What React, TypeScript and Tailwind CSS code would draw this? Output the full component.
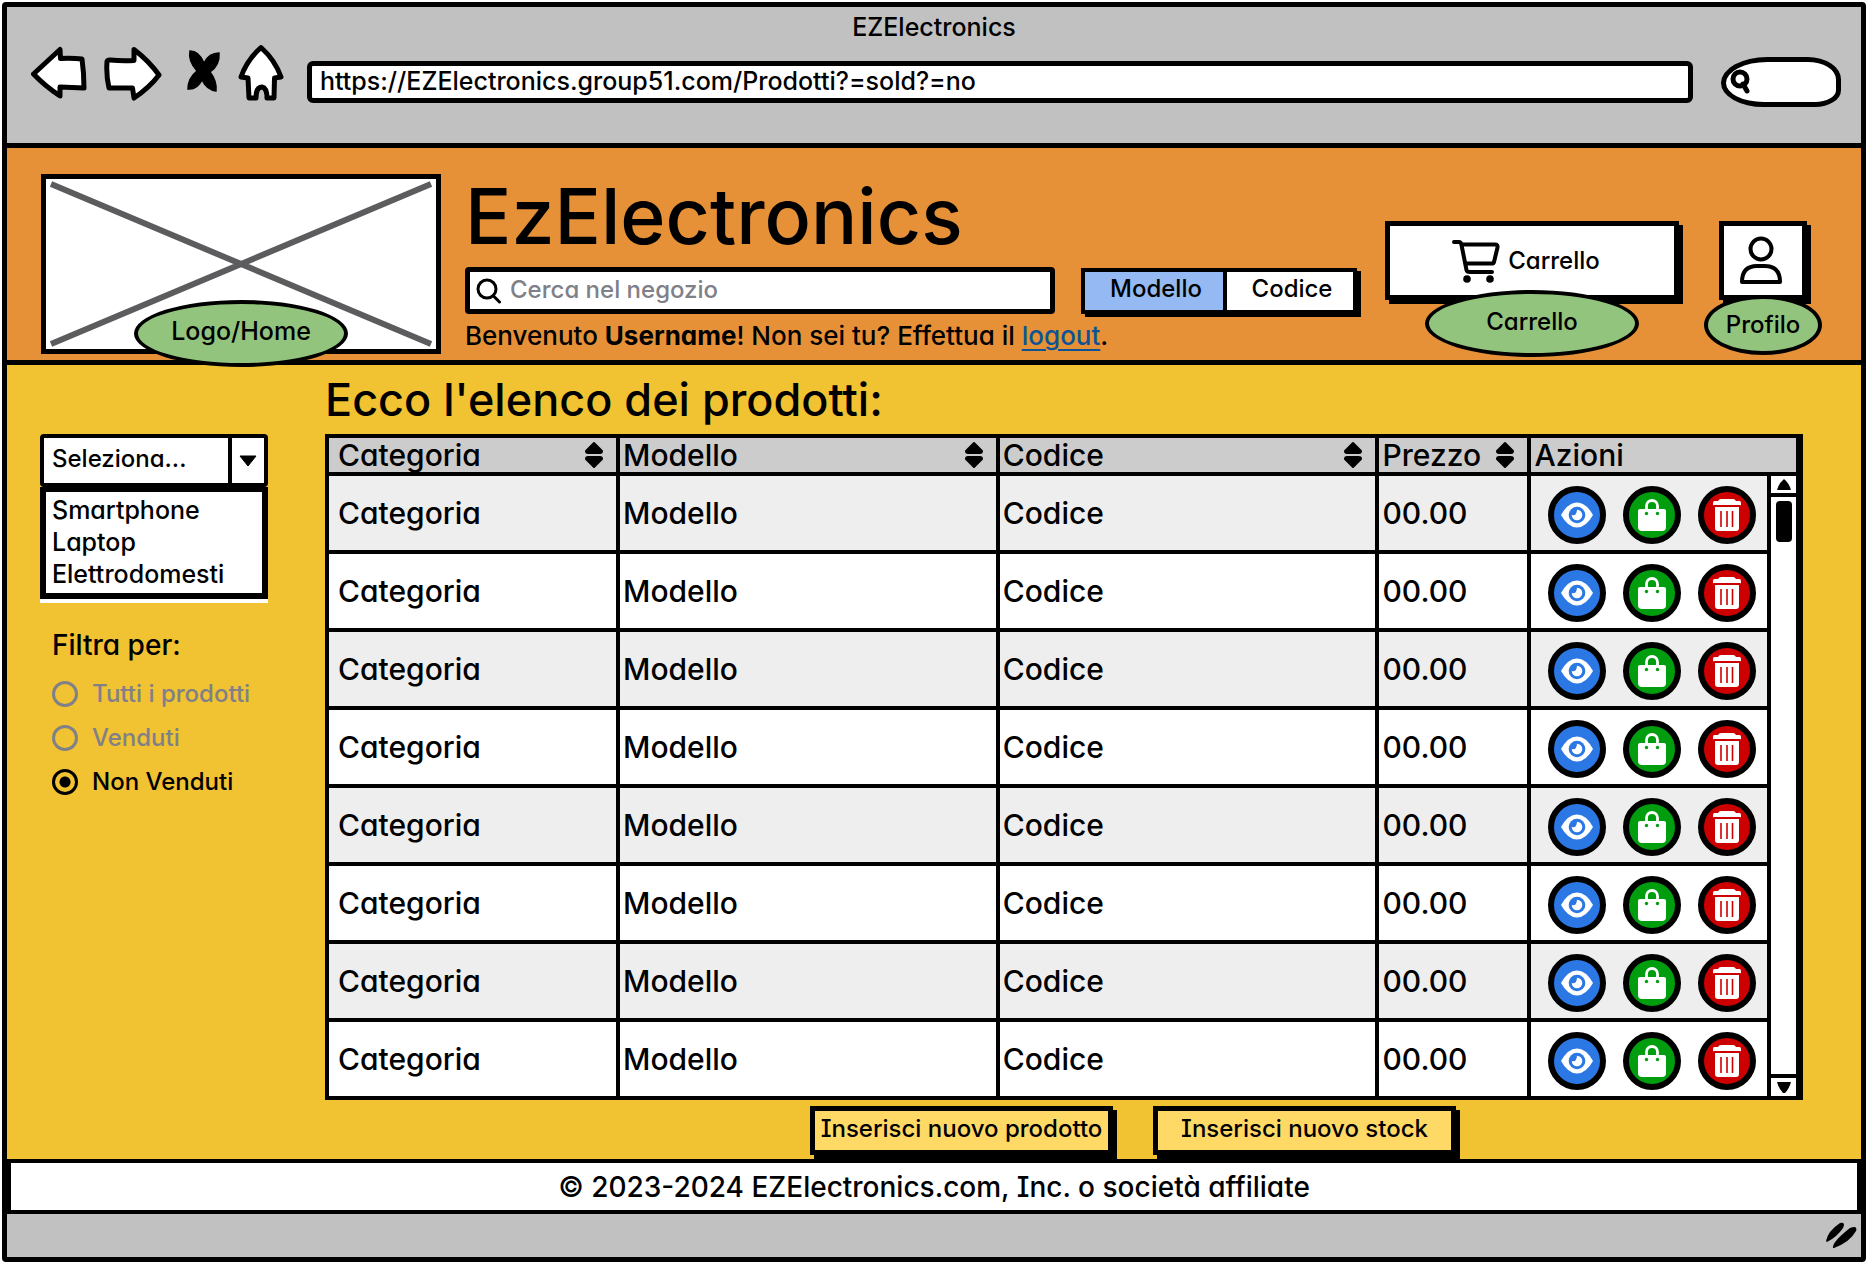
import React, { useState } from "react";

const INK = "#000000";

function BackArrow() {
  return (
    <svg width="56" height="56" viewBox="0 0 56 56" fill="white" stroke={INK} strokeWidth="5" strokeLinejoin="round">
      <path d="M2.500 29 L29 4.500 L29.500 13.500 Q42 13 51 14 Q53 28 53 43 L29 42 L29 51 Q14 41 2.500 29 Z" />
    </svg>
  );
}

function ForwardArrow() {
  return (
    <svg width="60" height="56" viewBox="0 0 60 56" fill="white" stroke={INK} strokeWidth="5" strokeLinejoin="round">
      <path d="M4 17 Q4 15 7 15 Q18 16 31 15.500 L31 4.500 Q46 16 56 30 Q46 43 31 53 L29.500 43 L6 43 Q3 30 4 17 Z" />
    </svg>
  );
}

function StopIcon() {
  return (
    <svg width="34" height="42" viewBox="0 0 34 42" fill={INK}>
      <path d="M3 1 Q12 1 17 13 Q22 3 32 3 Q33 15 23 22 Q30 31 29 41 Q20 40 15 30 Q10 40 1 39 Q1 28 10 21 Q1 11 3 1 Z" stroke={INK} strokeWidth="1.500" />
    </svg>
  );
}

function HomeIcon() {
  return (
    <svg width="48" height="58" viewBox="0 0 48 58" fill="white" stroke={INK} strokeWidth="5" strokeLinejoin="round">
      <path d="M24 3.500 Q38 16 44 33 L37.500 34 L37 54 L30 54 Q30 44 25 43 Q19 43 19 54 L12 54 L11 34 L4 33 Q10 16 24 3.500 Z" />
    </svg>
  );
}

function MiniSearch() {
  return (
    <svg className="shrink-0" width="22" height="26" viewBox="0 0 22 26" fill="none" stroke={INK} strokeWidth="5" strokeLinecap="round">
      <ellipse cx="10" cy="10" rx="7" ry="7" />
      <path d="M13 15 L17 22" />
    </svg>
  );
}

function SearchIcon() {
  return (
    <svg className="shrink-0" width="26" height="26" viewBox="0 0 26 26" fill="none" stroke={INK} strokeWidth="3" strokeLinecap="round">
      <circle cx="11" cy="11" r="9" />
      <path d="M17.500 18 L23.500 24" />
    </svg>
  );
}

function CartIcon() {
  return (
    <svg width="48" height="44" viewBox="0 0 48 44" fill="none" stroke={INK} strokeWidth="4" strokeLinecap="round" strokeLinejoin="round">
      <path d="M2 3 H7 Q9 3 9.500 6 L14.500 31 Q15 33 18 33 H40" />
      <path d="M10 5.500 H43 Q46 5.500 45.500 8.500 L42 23 Q41.500 24.500 39.500 24.500 H14" />
      <circle cx="15" cy="40" r="3.800" fill={INK} stroke="none" />
      <circle cx="38" cy="40" r="3.800" fill={INK} stroke="none" />
    </svg>
  );
}

function UserIcon() {
  return (
    <svg width="44" height="50" viewBox="0 0 44 50" fill="none" stroke={INK} strokeWidth="4" strokeLinejoin="round">
      <circle cx="22" cy="13" r="10.500" />
      <path d="M3 46 Q3 30 18 30 H26 Q41 30 41 46 Z" />
    </svg>
  );
}

function EyeIcon() {
  return (
    <svg width="32" height="32" viewBox="0 0 32 32">
      <path d="M0 16 Q7 3.500 16 3.500 Q25 3.500 32 16 Q25 28.500 16 28.500 Q7 28.500 0 16 Z" fill="white" />
      <circle cx="16" cy="16" r="8.300" fill="#2b78e4" />
      <path d="M16 10.700 A5.300 5.300 0 1 1 10.700 16 Q15.500 17.500 16 10.700 Z" fill="white" />
    </svg>
  );
}

function BagIcon() {
  return (
    <svg width="32" height="32" viewBox="0 0 32 32">
      <path d="M10.500 12 V7 A5.500 5.500 0 0 1 21.500 7 V12" fill="none" stroke="white" strokeWidth="2.800" />
      <path d="M4 10 H28 Q30 10 30 12 V28 Q30 32 26 32 H6 Q2 32 2 28 V12 Q2 10 4 10 Z" fill="white" />
      <circle cx="10.500" cy="14.500" r="1.700" fill="#009e0f" />
      <circle cx="21.500" cy="14.500" r="1.700" fill="#009e0f" />
    </svg>
  );
}

function TrashIcon() {
  return (
    <svg width="32" height="32" viewBox="0 0 32 32">
      <path d="M3.500 2 H7 Q8 0 10 0 H22 Q24 0 25 2 H28.500 Q30 2 30 4 V6 Q30 6.500 29 6 H3 Q2 6.500 2 6 V4 Q2 2 3.500 2 Z" fill="white" />
      <path d="M4 8 H28 V29 Q28 32 25 32 H7 Q4 32 4 29 Z" fill="white" />
      <path d="M10 12 V28 M16 12 V28 M21.500 12 V28" stroke="#cc0000" strokeWidth="1.600" />
    </svg>
  );
}

function SortIcon() {
  return (
    <svg width="20" height="28" viewBox="0 0 20 28" fill={INK} stroke={INK} strokeWidth="2" strokeLinejoin="round">
      <path d="M10 2 L18 10 Q18 12 16 12 H4 Q2 12 2 10 Z" />
      <path d="M10 26 L18 18 Q18 16 16 16 H4 Q2 16 2 18 Z" />
    </svg>
  );
}

const columns = ["Categoria", "Modello", "Codice", "Prezzo"];
const products = Array.from({ length: 8 }, (_, id) => ({
  id,
  category: "Categoria",
  model: "Modello",
  code: "Codice",
  price: "00.00",
}));
const filters = ["Tutti i prodotti", "Venduti", "Non Venduti"];

function BrowserBar() {
  return (
    <div className="border-b-[5px] border-black bg-[#c1c1c1] pb-9">
      <p className="h-8 pt-0.5 text-center text-[25px] leading-9">EZElectronics</p>
      <div className="flex items-center pl-6 pr-5">
        <button aria-label="Indietro" className="mr-4"><BackArrow /></button>
        <button aria-label="Avanti" className="mr-6"><ForwardArrow /></button>
        <button aria-label="Interrompi" className="mr-4 pb-1"><StopIcon /></button>
        <button aria-label="Pagina iniziale" className="mr-[22px]"><HomeIcon /></button>
        <input
          aria-label="Indirizzo"
          defaultValue="https://EZElectronics.group51.com/Prodotti?=sold?=no"
          className="mr-7 mt-[18px] h-[42px] min-w-0 flex-1 rounded-md border-[5px] border-black bg-white px-2 pb-0.5 text-[25px]"
        />
        <label className="mt-[18px] flex h-[50px] w-[120px] items-center rounded-[50px_36px_28px_46px/28px_24px_18px_26px] border-[5px] border-black bg-white pl-1">
          <MiniSearch />
          <input aria-label="Cerca nel web" className="w-full min-w-0 bg-transparent outline-none" />
        </label>
      </div>
    </div>
  );
}

function Header() {
  const [mode, setMode] = useState("Modello");
  return (
    <header className="flex h-[217px] items-start border-b-[5px] border-black bg-[#e69138] pl-[34px] pr-[54px]">
      <a href="#home" className="relative mr-6 mt-[26px] block h-[180px] w-[400px] shrink-0 border-[5px] border-black bg-white">
        <svg className="h-full w-full" viewBox="0 0 390 170" preserveAspectRatio="none" stroke="#5c5c5e" strokeWidth="6">
          <path d="M5 5 L385 165 M5 165 L385 5" />
        </svg>
        <span className="absolute -bottom-[18px] left-[88px] flex h-[67px] w-[214px] items-center justify-center rounded-[50%] border-4 border-black bg-[#93c47d] pb-1 text-[25px]">
          Logo/Home
        </span>
      </a>
      <div className="mr-6 min-w-0 flex-1 pt-[26px]">
        <h1 className="h-[93px] text-[77px] leading-[84px]">EzElectronics</h1>
        <div className="flex items-center">
          <label className="flex h-[47px] min-w-0 flex-1 items-center rounded-sm border-[5px] border-black bg-white px-[6px]">
            <SearchIcon />
            <input aria-label="Cerca" placeholder="Cerca nel negozio" className="w-full min-w-0 bg-transparent pb-0.5 pl-2 text-2xl outline-none placeholder:text-[#808088]" />
          </label>
          <div className="ml-[26px] mr-1 flex h-[46px] w-[276px] border-4 border-black bg-white text-2xl shadow-[4px_3px_0_0_#000]">
            {["Modello", "Codice"].map((name) => (
              <button
                key={name}
                aria-pressed={mode === name}
                onClick={() => setMode(name)}
                className="min-w-0 flex-1 pb-1 pl-1 first:flex-none first:w-[142px] first:border-r-4 first:border-black aria-pressed:bg-[#94b9f3]"
              >
                {name}
              </button>
            ))}
          </div>
        </div>
        <p className="pt-1 text-[26px] leading-9 whitespace-nowrap">
          Benvenuto <strong className="font-bold">Username</strong>! Non sei tu? Effettua il{" "}
          <a href="#logout" className="text-[#0b5394] underline decoration-2 underline-offset-4">logout</a>.
        </p>
      </div>
      <div className="mr-10 mt-[73px] flex w-[294px] shrink-0 flex-col items-center">
        <button className="flex h-[79px] w-full items-center justify-center gap-2 border-[5px] border-black bg-white pr-3 text-2xl shadow-[4px_4px_0_0_#000]">
          <CartIcon />
          Carrello
        </button>
        <span className="relative -mt-[10px] flex h-[67px] w-[214px] items-center justify-center rounded-[50%] border-4 border-black bg-[#93c47d] pb-1 text-2xl">Carrello</span>
      </div>
      <div className="mt-[73px] flex w-[88px] shrink-0 flex-col items-center">
        <button aria-label="Profilo" className="flex h-[79px] w-full items-center justify-center border-[5px] border-black bg-white pr-1 shadow-[4px_4px_0_0_#000]">
          <UserIcon />
        </button>
        <span className="relative -mt-[5px] flex h-[60px] w-[118px] items-center justify-center rounded-[50%] border-4 border-black bg-[#93c47d] text-2xl">Profilo</span>
      </div>
    </header>
  );
}

function Sidebar() {
  const [filter, setFilter] = useState("Non Venduti");
  return (
    <aside className="w-[228px] shrink-0 pt-[69px] text-2xl">
      <div className="flex h-[53px] rounded-sm border-4 border-black bg-white">
        <select aria-label="Categoria" className="min-w-0 flex-1 appearance-none border-r-4 border-black bg-transparent pb-1 pl-2 outline-none">
          <option>Seleziona...</option>
        </select>
        <span className="flex w-8 items-center justify-center">
          <svg width="18" height="12" viewBox="0 0 18 12"><path d="M1 1 H17 L9 11 Z" fill={INK} stroke={INK} strokeLinejoin="round" /></svg>
        </span>
      </div>
      <div className="bg-white pb-1">
        <ul role="listbox" aria-label="Categorie" className="h-[112px] border-[6px] border-t-[5px] border-black bg-white pl-[6px] pt-0.5 text-[25px] leading-8">
          <li role="option" aria-selected="false">Smartphone</li>
          <li role="option" aria-selected="false">Laptop</li>
          <li role="option" aria-selected="false">Elettrodomesti</li>
        </ul>
      </div>
      <fieldset className="pl-3 pt-5">
        <legend className="float-left h-[49px] w-full text-[28px] leading-[44px]">Filtra per:</legend>
        {filters.map((name) => (
          <label key={name} className="clear-both flex h-11 w-full items-center gap-[14px] text-[#808088] has-checked:text-black">
            <input
              type="radio"
              name="filter"
              checked={filter === name}
              onChange={() => setFilter(name)}
              className="h-[26px] w-[26px] shrink-0 appearance-none rounded-full border-[3px] border-current checked:bg-[radial-gradient(circle,#000_5px,transparent_6px)]"
            />
            {name}
          </label>
        ))}
      </fieldset>
    </aside>
  );
}

const actions = [
  { label: "Visualizza", tone: "bg-[#2b78e4]", icon: <EyeIcon /> },
  { label: "Vendi", tone: "bg-[#009e0f]", icon: <BagIcon /> },
  { label: "Elimina", tone: "bg-[#cc0000]", icon: <TrashIcon /> },
];

function ProductTable() {
  return (
    <table className="w-full table-fixed border-collapse border-4 border-r-[7px] border-black bg-white text-[30px] leading-9">
      <colgroup>
        <col className="w-[291px]" />
        <col />
        <col />
        <col className="w-[152px]" />
        <col className="w-[240px]" />
        <col className="w-[30px]" />
      </colgroup>
      <thead>
        <tr className="h-[38px] bg-[#cccccc] leading-8">
          {columns.map((name) => (
            <th key={name} scope="col" className="border-4 border-black p-0 pl-[3px] text-left font-medium first:pl-[9px]">
              <button className="flex h-[34px] w-full items-center justify-between pr-3">
                {name}
                <SortIcon />
              </button>
            </th>
          ))}
          <th scope="col" colSpan={2} className="border-4 border-black p-0 pl-[3px] text-left font-medium">Azioni</th>
        </tr>
      </thead>
      <tbody>
        {products.map((p, i) => (
          <tr key={p.id} className="h-[78px] bg-white odd:bg-[#eeeeee]">
            <td className="border-4 border-black p-0 pl-[9px]">{p.category}</td>
            <td className="border-4 border-black p-0 pl-[3px]">{p.model}</td>
            <td className="border-4 border-black p-0 pl-[3px]">{p.code}</td>
            <td className="border-4 border-black p-0 pl-[3px]">{p.price}</td>
            <td className="border-4 border-black p-0 pl-[17px] pt-1">
              <div className="flex gap-[17px]">
                {actions.map((a) => (
                  <button key={a.label} aria-label={a.label} className={`flex h-[58px] w-[58px] items-center justify-center rounded-full border-[6px] border-black ${a.tone}`}>
                    {a.icon}
                  </button>
                ))}
              </div>
            </td>
            {i === 0 && (
              <td rowSpan={8} className="h-px border-4 border-black bg-white p-0">
                <div className="flex h-full flex-col items-center">
                  <button aria-label="Scorri su" className="flex h-[21px] w-full items-center justify-center border-b-4 border-black">
                    <svg width="16" height="11" viewBox="0 0 16 11"><path d="M8 0 Q13 4 15 11 H1 Q3 4 8 0 Z" fill={INK} /></svg>
                  </button>
                  <span className="mt-1 h-[41px] w-4 rounded-sm bg-black" />
                  <button aria-label="Scorri giù" className="mt-auto flex h-[22px] w-full items-center justify-center border-t-4 border-black">
                    <svg width="16" height="11" viewBox="0 0 16 11"><path d="M1 0 H15 Q13 7 9 11 H7 Q3 7 1 0 Z" fill={INK} /></svg>
                  </button>
                </div>
              </td>
            )}
          </tr>
        ))}
      </tbody>
    </table>
  );
}

export default function App() {
  return (
    <div className="bg-white p-0.5 font-['Inter',sans-serif] font-medium text-black [font-feature-settings:'cv11','cv08']">
      <div className="rounded-sm border-[5px] border-black bg-[#c1c1c1]">
        <BrowserBar />
        <Header />
        <main className="flex bg-[#f1c232] pl-[33px] pr-[58px]">
          <Sidebar />
          <section className="ml-[57px] min-w-0 flex-1">
            <h2 className="h-[69px] text-[45px] leading-[70px]">Ecco l'elenco dei prodotti:</h2>
            <ProductTable />
            <div className="flex justify-center gap-10 pb-1 pl-[138px] pt-[6px]">
              <button className="h-[49px] w-[303px] border-[5px] border-black bg-[#ffd966] pb-1 text-2xl whitespace-nowrap shadow-[4px_4px_0_0_#000]">Inserisci nuovo prodotto</button>
              <button className="h-[49px] w-[303px] border-[5px] border-black bg-[#ffd966] pb-1 text-2xl whitespace-nowrap shadow-[4px_4px_0_0_#000]">Inserisci nuovo stock</button>
            </div>
          </section>
        </main>
        <footer>
          <p className="h-[55px] border-4 border-black bg-white text-center text-[28px] leading-[48px]">© 2023-2024 EZElectronics.com, Inc. o società affiliate</p>
          <div className="flex h-[43px] items-center justify-end pr-1">
            <svg width="32" height="28" viewBox="0 0 32 28" fill={INK}>
              <path d="M1 19 Q3 9 15 1 Q21 0 18 6 Q12 15 2 20 Z" />
              <path d="M8 26 Q7 20 25 6 Q33 3 31 9 Q25 20 9 26 Z" />
            </svg>
          </div>
        </footer>
      </div>
    </div>
  );
}
